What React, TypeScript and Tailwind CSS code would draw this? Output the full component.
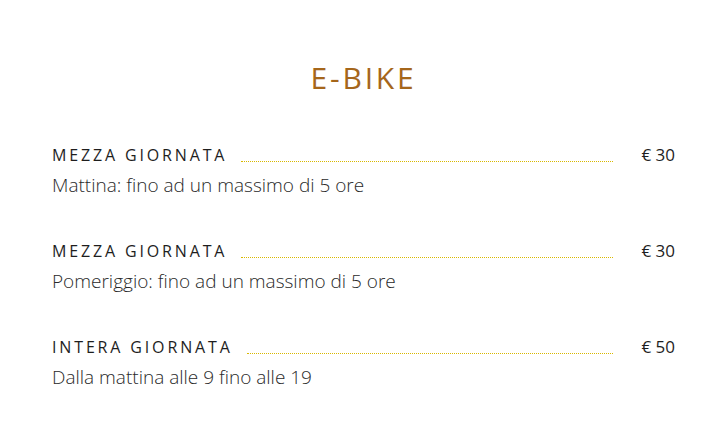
import React from 'react';

const items = [
  { title: 'MEZZA GIORNATA', desc: 'Mattina: fino ad un massimo di 5 ore', price: '€ 30' },
  { title: 'MEZZA GIORNATA', desc: 'Pomeriggio: fino ad un massimo di 5 ore', price: '€ 30' },
  { title: 'INTERA GIORNATA', desc: 'Dalla mattina alle 9 fino alle 19', price: '€ 50' },
];

const PriceRow: React.FC<{ item: (typeof items)[number] }> = ({ item }) => {
  return (
    <div className="flex flex-col">
      <div className="flex items-end">
        <span className="text-[16px] leading-[22px] tracking-[2.85px] text-[#1e1e1e]">{item.title}</span>
        <span className="flex-1 h-0 ml-[14px] mr-[28px] mb-[4px] border-b border-dotted border-[#d9b800]" />
        <span className="text-[17px] leading-[22px] text-[#1e1e1e]">{item.price}</span>
      </div>
      <p className="mt-[6px] text-[19px] leading-[26px] font-light text-[#2a2a2a]">{item.desc}</p>
    </div>
  );
};

export default function App() {
  return (
    <div className="w-[725px] h-[431px] bg-white pl-[52px] pr-[50px] pt-[58px] font-['Open_Sans',sans-serif]">
      <h1 className="text-center text-[30px] leading-[40px] tracking-[2.8px] text-[#a5661b] font-normal">E-BIKE</h1>
      <div className="mt-[46px] flex flex-col gap-[42px]">
        {items.map((item, i) => (
          <PriceRow key={i} item={item} />
        ))}
      </div>
    </div>
  );
}
